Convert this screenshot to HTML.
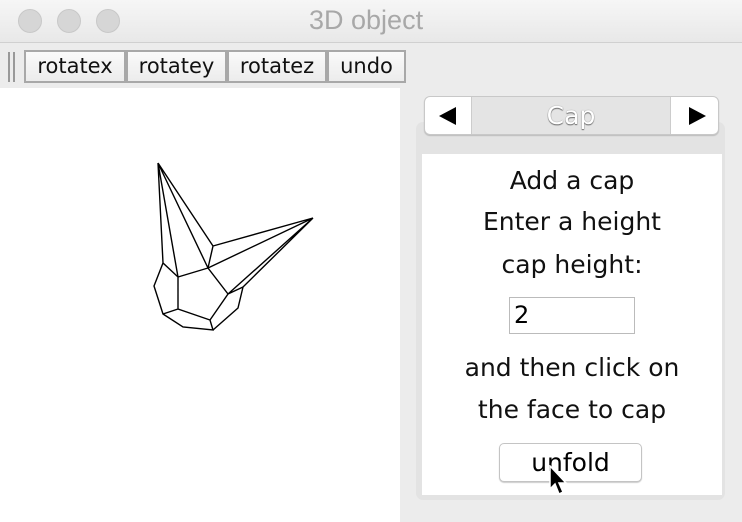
<!DOCTYPE html>
<html><head><style>
*{margin:0;padding:0;box-sizing:border-box}
body{width:742px;height:522px;overflow:hidden;background:#ececec;font-family:"DejaVu Sans","Liberation Sans",sans-serif;position:relative}
.a{position:absolute}
.title{left:0;top:0;width:742px;height:43px;background:linear-gradient(#f6f6f6,#e8e8e8);border-bottom:1px solid #d0d0d0}
.dot{width:24px;height:24px;border-radius:50%;background:#d6d6d6;border:1px solid #c8c8c8;top:9px}
.tb{top:50px;height:33px;border:2px solid #a8a8a8;background:linear-gradient(#fafafa,#ececec);font-size:21px;text-align:center;line-height:29px;color:#111}
.t{width:300px;left:422px;text-align:center;font-size:25px;color:#111;white-space:nowrap}
</style></head><body>
<div class="a title"></div>
<div class="a dot" style="left:18px"></div>
<div class="a dot" style="left:57px"></div>
<div class="a dot" style="left:96px"></div>
<div class="a" style="left:309px;top:5px;font-size:27px;color:#a8a8a8;font-family:'Liberation Sans',sans-serif">3D object</div>
<div class="a" style="left:8px;top:52px;width:2px;height:30px;background:#999"></div>
<div class="a" style="left:13px;top:52px;width:2px;height:30px;background:#999"></div>
<div class="a tb" style="left:24px;width:102px">rotatex</div>
<div class="a tb" style="left:126px;width:101px">rotatey</div>
<div class="a tb" style="left:227px;width:100px">rotatez</div>
<div class="a tb" style="left:327px;width:79px">undo</div>
<div class="a" style="left:0;top:88px;width:400px;height:434px;background:#fff"></div>
<svg class="a" style="left:0;top:0" width="400" height="522" fill="none" stroke="#000" stroke-width="1.4">
<path d="M158,163L163,263M158,163L178,277M158,163L208,268M158,163L213,246L208,268L178,277L163,263L154,286L163,314L183,327L213,330L210,320L178,309L178,277M163,314L178,309M213,246L313,218L208,268L228,294L210,320M228,294L313,218M243,287L313,218M213,330L238,308L243,287L228,294"/>
</svg>
<div class="a" style="left:416px;top:122px;width:309px;height:378px;background:#e3e3e3;border-radius:7px"></div>
<div class="a" style="left:422px;top:154px;width:300px;height:341px;background:#fff"></div>
<div class="a" style="left:424px;top:96px;width:295px;height:39px;background:#fff;border:1px solid #c8c8c8;border-radius:6px;box-shadow:0 1px 1px #bbb"></div>
<div class="a" style="left:471px;top:97px;width:200px;height:37px;background:#e4e4e4;border-left:1px solid #ccc;border-right:1px solid #ccc;text-align:center;font-size:25px;line-height:37px;color:#fff;text-shadow:0 0 1px #777,0 1px 1px #666">Cap</div>
<div class="a" style="left:439px;top:107px;width:0;height:0;border-top:9px solid transparent;border-bottom:9px solid transparent;border-right:17px solid #000"></div>
<div class="a" style="left:689px;top:107px;width:0;height:0;border-top:9px solid transparent;border-bottom:9px solid transparent;border-left:17px solid #000"></div>
<div class="a t" style="top:166px">Add a cap</div>
<div class="a t" style="top:207px">Enter a height</div>
<div class="a t" style="top:250px">cap height:</div>
<div class="a" style="left:509px;top:297px;width:126px;height:37px;border:1px solid #bbb;background:#fff;font-size:24px;line-height:35px;padding-left:4px">2</div>
<div class="a t" style="top:353px">and then click on</div>
<div class="a t" style="top:395px">the face to cap</div>
<div class="a" style="left:499px;top:443px;width:143px;height:39px;border:1px solid #c4c4c4;border-radius:5px;background:#fff;box-shadow:0 1px 1px #ccc;text-align:center;font-size:25px;line-height:37px">unfold</div>
<svg class="a" style="left:548px;top:465px" width="24" height="34"><path d="M2,1L2,24L7,19L11,29L15,27L11,18L18,18Z" fill="#000" stroke="#fff" stroke-width="1.5"/></svg>
</body></html>
